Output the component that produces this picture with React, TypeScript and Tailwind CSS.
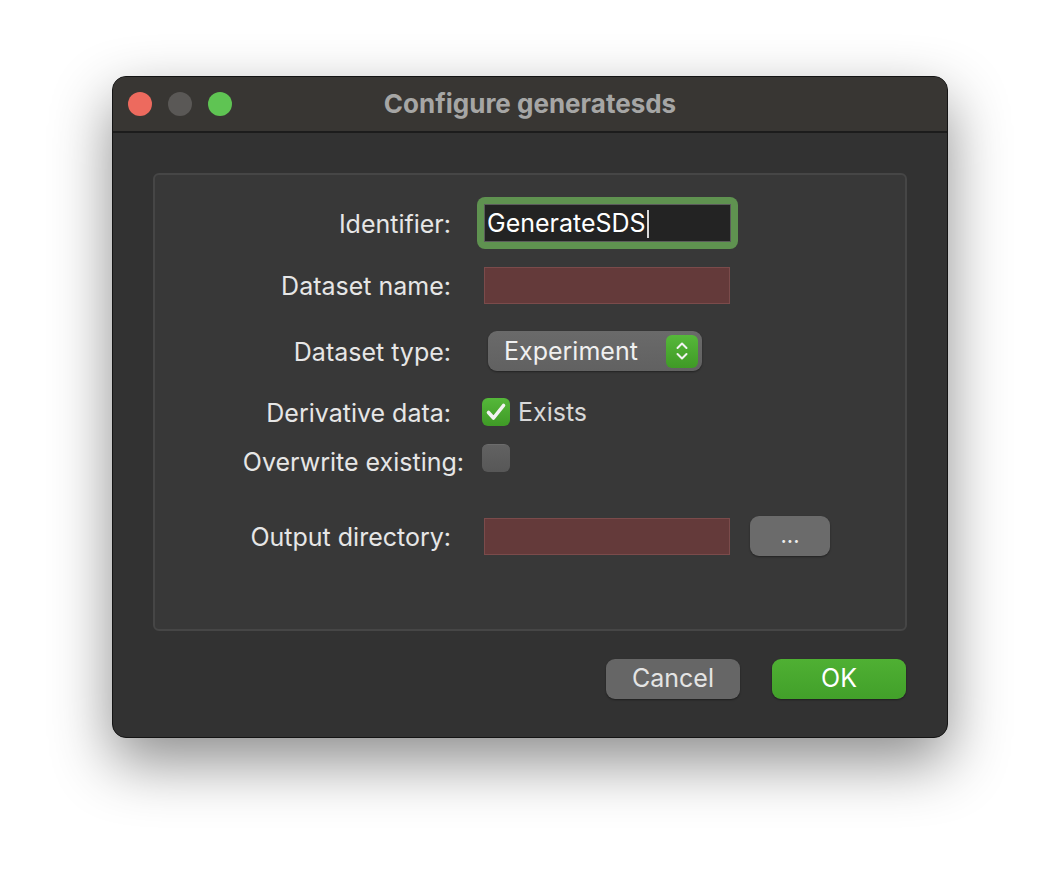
import React from 'react';

const font = { fontFamily: 'Inter, "Liberation Sans", sans-serif' };

const Label: React.FC<{ text: string }> = ({ text }) => (
  <div className="shrink-0 w-[296px] text-right text-[25px] text-[#e6e6e6] pt-[3px]">{text}</div>
);

const RedField: React.FC = () => (
  <div className="w-[246px] h-[37px] bg-[#643a3a] border border-[#7b4b4b]" />
);

const Checkbox: React.FC<{ checked?: boolean }> = ({ checked }) =>
  checked ? (
    <div className="w-[28px] h-[28px] rounded-[6px] bg-gradient-to-b from-[#55b83a] to-[#3f9a26] flex items-center justify-center">
      <svg width="22" height="20" viewBox="0 0 22 20" fill="none">
        <path d="M3.5 10.5 L8.5 16 L18.5 3.5" stroke="#f2f2f2" strokeWidth="3.6" strokeLinecap="round" strokeLinejoin="round" />
      </svg>
    </div>
  ) : (
    <div className="w-[28px] h-[28px] rounded-[6px] bg-gradient-to-b from-[#626262] to-[#575757] border-t border-[#6c6c6c]" />
  );

export default function App() {
  return (
    <div className="w-[1060px] h-[886px] bg-white pt-[76px] pl-[112px]" style={font}>
      <div className="w-[836px] h-[662px] rounded-[14px] bg-[#323232] border border-[#141414] shadow-[0_24px_60px_rgba(0,0,0,0.45)] overflow-hidden flex flex-col">
        {/* title bar */}
        <div className="h-[56px] shrink-0 bg-[#383633] border-b-2 border-[#1c1c1c] flex items-center relative">
          <div className="flex items-center gap-[16px] pl-[15px]">
            <div className="w-[24px] h-[24px] rounded-full bg-[#ed6a5e]" />
            <div className="w-[24px] h-[24px] rounded-full bg-[#5a5856]" />
            <div className="w-[24px] h-[24px] rounded-full bg-[#5fc453]" />
          </div>
          <div className="absolute inset-0 flex items-center justify-center text-[26px] font-bold text-[#a6a6a5] pb-[1px]">
            Configure generatesds
          </div>
        </div>

        {/* body */}
        <div className="flex flex-col px-[40px] pt-[40px]">
          <div className="h-[458px] rounded-[6px] bg-[#383838] border-2 border-[#464646] flex flex-col pt-[29px]">
            <div className="h-[38px] flex items-center">
              <Label text="Identifier:" />
              <div className="ml-[26px] p-[7px] rounded-[8px] bg-[#5f9250]">
                <div className="w-[247px] h-[38px] bg-[#232323] border border-[#5b5b5b] flex items-center pl-[2px] pt-[2px] text-[25px] text-white">
                  GenerateSDS
                  <span className="inline-block w-[2px] h-[28px] bg-[#d8d8d8] ml-[1px]" />
                </div>
              </div>
            </div>

            <div className="h-[38px] mt-[24px] flex items-center">
              <Label text="Dataset name:" />
              <div className="ml-[33px]"><RedField /></div>
            </div>

            <div className="h-[40px] mt-[27px] flex items-center">
              <Label text="Dataset type:" />
              <div className="ml-[37px] w-[214px] h-[40px] rounded-[9px] bg-gradient-to-b from-[#6a6a6a] to-[#616161] shadow-[0_1px_2px_rgba(0,0,0,0.4)] flex items-center justify-between pl-[16px] pr-[4px]">
                <span className="text-[25px] text-[#f0f0f0] pt-[2px]">Experiment</span>
                <div className="w-[32px] h-[33px] rounded-[6px] bg-gradient-to-b from-[#56b83a] to-[#3f9a26] flex items-center justify-center">
                  <svg width="16" height="24" viewBox="0 0 16 24" fill="none">
                    <path d="M3.5 9 L8 4.5 L12.5 9" stroke="#f2f2f2" strokeWidth="2" strokeLinecap="round" strokeLinejoin="round" />
                    <path d="M3.5 15 L8 19.5 L12.5 15" stroke="#f2f2f2" strokeWidth="2" strokeLinecap="round" strokeLinejoin="round" />
                  </svg>
                </div>
              </div>
            </div>

            <div className="h-[28px] mt-[27px] flex items-center">
              <Label text="Derivative data:" />
              <div className="ml-[31px] flex items-center gap-[8px]">
                <Checkbox checked />
                <span className="text-[25px] text-[#d8d8d8] pt-[2px]">Exists</span>
              </div>
            </div>

            <div className="h-[28px] mt-[18px] flex items-center">
              <div className="w-[309px] shrink-0 text-right text-[25px] text-[#e6e6e6] mt-[10px]">Overwrite existing:</div>
              <div className="ml-[18px]"><Checkbox /></div>
            </div>

            <div className="h-[40px] mt-[44px] flex items-center">
              <Label text="Output directory:" />
              <div className="ml-[33px]"><RedField /></div>
              <div className="ml-[20px] w-[80px] h-[40px] rounded-[9px] bg-[#6b6b6b] shadow-[0_1px_2px_rgba(0,0,0,0.4)] flex items-center justify-center text-[22px] text-[#eeeeee] pb-[2px]">
                ...
              </div>
            </div>
          </div>

          <div className="flex justify-end gap-[32px] mt-[28px] pr-[1px]">
            <div className="w-[134px] h-[40px] rounded-[9px] bg-[#666666] shadow-[0_1px_2px_rgba(0,0,0,0.4)] flex items-center justify-center text-[25px] text-[#e4e4e4]">
              Cancel
            </div>
            <div className="w-[134px] h-[40px] rounded-[9px] bg-gradient-to-b from-[#4fb033] to-[#42a02a] shadow-[0_1px_2px_rgba(0,0,0,0.4)] flex items-center justify-center text-[25px] text-white">
              OK
            </div>
          </div>
        </div>
      </div>
    </div>
  );
}
